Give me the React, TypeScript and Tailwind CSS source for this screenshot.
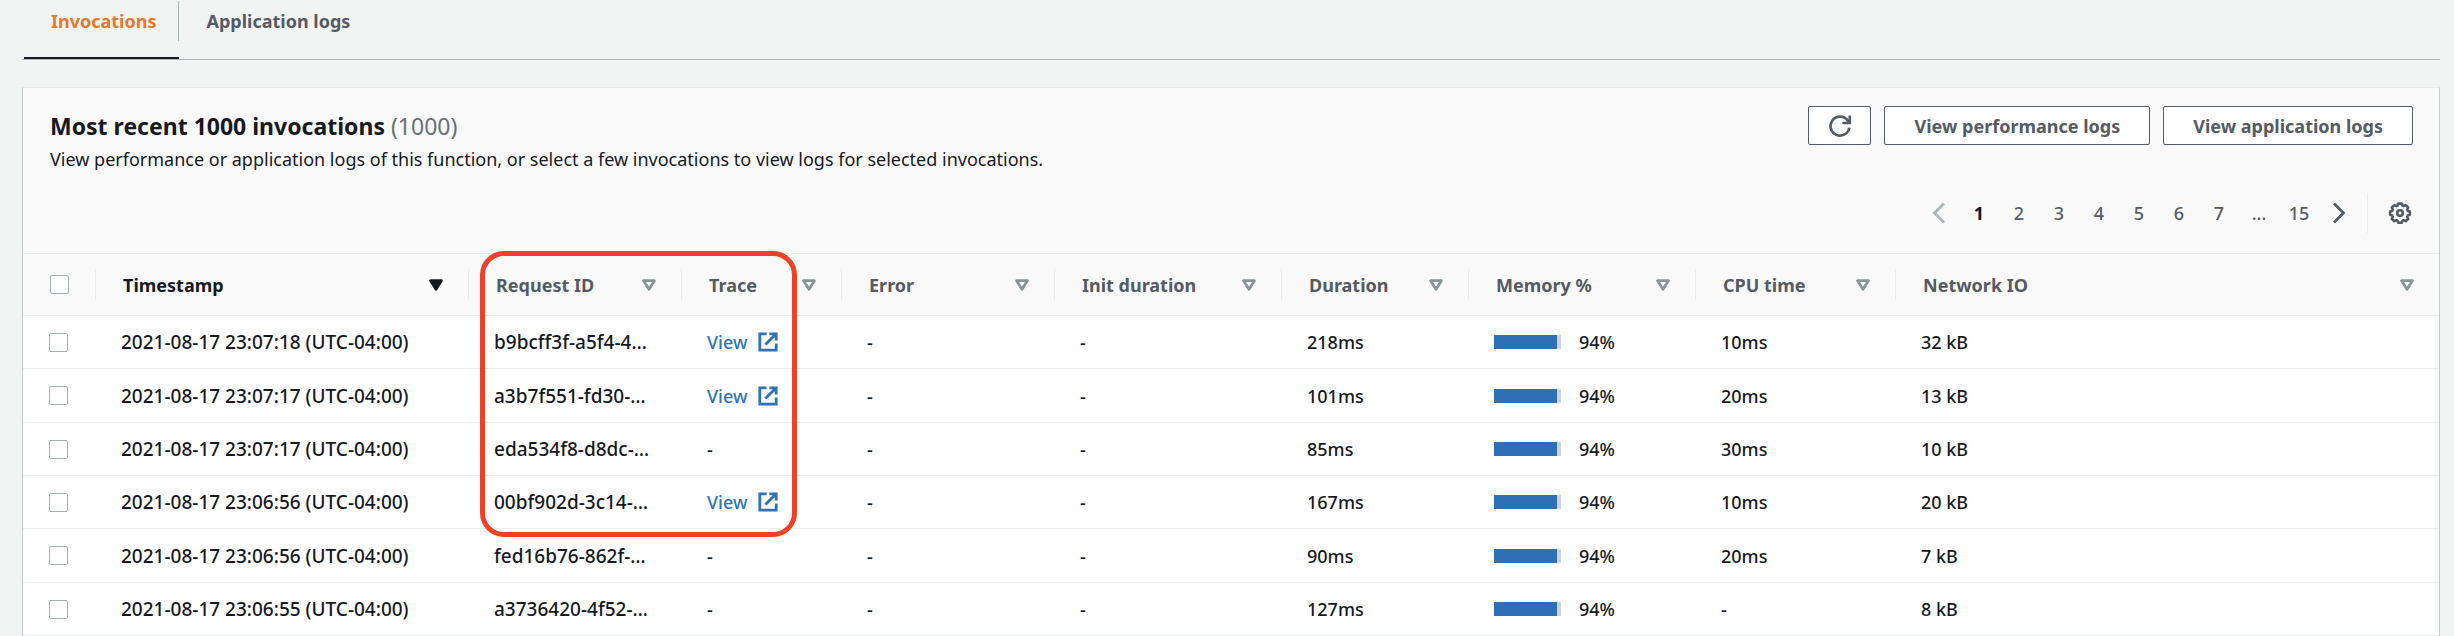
import React from "react";

const COLUMNS = [
  { label: "Timestamp", width: "w-[373px]", sorted: true },
  { label: "Request ID", width: "w-[213px]" },
  { label: "Trace", width: "w-[160px]" },
  { label: "Error", width: "w-[213px]" },
  { label: "Init duration", width: "w-[227px]" },
  { label: "Duration", width: "w-[187px]" },
  { label: "Memory %", width: "w-[227px]" },
  { label: "CPU time", width: "w-[200px]" },
  { label: "Network IO", width: "" },
];

const ROWS = [
  { time: "2021-08-17 23:07:18 (UTC-04:00)", id: "b9bcff3f-a5f4-4…", trace: true, duration: "218ms", memory: 94, cpu: "10ms", io: "32 kB" },
  { time: "2021-08-17 23:07:17 (UTC-04:00)", id: "a3b7f551-fd30-…", trace: true, duration: "101ms", memory: 94, cpu: "20ms", io: "13 kB" },
  { time: "2021-08-17 23:07:17 (UTC-04:00)", id: "eda534f8-d8dc-…", trace: false, duration: "85ms", memory: 94, cpu: "30ms", io: "10 kB" },
  { time: "2021-08-17 23:06:56 (UTC-04:00)", id: "00bf902d-3c14-…", trace: true, duration: "167ms", memory: 94, cpu: "10ms", io: "20 kB" },
  { time: "2021-08-17 23:06:56 (UTC-04:00)", id: "fed16b76-862f-…", trace: false, duration: "90ms", memory: 94, cpu: "20ms", io: "7 kB" },
  { time: "2021-08-17 23:06:55 (UTC-04:00)", id: "a3736420-4f52-…", trace: false, duration: "127ms", memory: 94, cpu: "-", io: "8 kB" },
];

const PAGES = ["1", "2", "3", "4", "5", "6", "7", "...", "15"];

const CELL = "border-b border-[#eaeded] p-0 pl-[26px]";
const BUTTON =
  "flex h-[39px] items-center justify-center rounded-[2px] border border-[#545b64] bg-white font-bold text-[#545b64]";

function RefreshIcon() {
  return (
    <svg className="size-6" viewBox="0 0 24 24" fill="none" stroke="currentColor" strokeWidth="2.6" aria-hidden="true">
      <path d="M21.4 13.6A9.5 9.5 0 1 1 19.6 6.4L21.6 9" />
      <path d="M21.8 1.4V9H14.4" />
    </svg>
  );
}

function GearIcon() {
  return (
    <svg className="size-6" viewBox="0 0 24 24" fill="none" stroke="currentColor" strokeWidth="2.6" strokeLinejoin="round" aria-hidden="true">
      <path d="M10.2 2.6h3.6l.6 2 1.3.5 2-1 2.5 2.4-1 2 .6 1.4 2.1.6v3.3l-2.1.6-.6 1.4 1 2-2.5 2.4-2-1-1.3.5-.6 2h-3.6l-.6-2-1.3-.5-2 1-2.5-2.4 1-2-.6-1.4-2.1-.6v-3.3l2.1-.6.6-1.4-1-2 2.5-2.4 2 1 1.3-.5z" />
      <circle cx="12" cy="12.1" r="2.8" />
    </svg>
  );
}

function ExternalIcon() {
  return (
    <svg className="size-5" viewBox="0 0 20 20" fill="none" stroke="currentColor" strokeWidth="2.8" aria-hidden="true">
      <path d="M8.6 1.8H1.8v16.4h16.4v-6.8" />
      <path d="M11.4 1.8h6.8v6.8M18 2L7.4 12.6" />
    </svg>
  );
}

function Chevron({ next = false }: { next?: boolean }) {
  return (
    <svg className="h-[22px] w-3.5" viewBox="0 0 14 22" fill="none" stroke="currentColor" strokeWidth="2.8" aria-hidden="true">
      <path d={next ? "M2 1.5L11.5 11L2 20.5" : "M12 1.5L2.5 11L12 20.5"} />
    </svg>
  );
}

function SortIcon({ filled = false }: { filled?: boolean }) {
  return (
    <svg
      className={filled ? "h-3 w-3.5 text-[#16191f]" : "h-3 w-3.5 text-[#879596]"}
      viewBox="0 0 14 12"
      fill={filled ? "currentColor" : "none"}
      stroke="currentColor"
      strokeWidth="2.8"
      strokeLinejoin="round"
      aria-hidden="true"
    >
      <path d="M1.6 1.7h10.8L7 10.2z" />
    </svg>
  );
}

function Tick({ label }: { label: string }) {
  return (
    <input
      type="checkbox"
      aria-label={label}
      className="block size-[19px] appearance-none rounded-[2px] border border-[#a3b0b1] bg-white checked:bg-[#0073bb]"
    />
  );
}

export default function App() {
  return (
    <main className="min-h-screen bg-[#f2f3f3] pr-[14px] pl-[22px] font-['Noto_Sans',sans-serif] text-[18px] leading-6 font-medium text-[#16191f]">
      <nav className="flex border-b border-[#aab7b8]">
        <a href="#invocations" className="ml-0.5 border-b-2 border-[#16191f] font-bold text-[#e07b2f]">
          <span className="mt-px mb-4 block border-r border-[#aab7b8] py-2 pr-[22px] pl-[27px]">Invocations</span>
        </a>
        <a href="#application-logs" className="px-[27px] pt-[9px] font-bold text-[#545b64]">
          Application logs
        </a>
      </nav>

      <section className="mt-[27px] border-x border-t border-x-[#c3cacb] border-t-[#eaeded] bg-[#fafafa]">
        <header className="flex items-start justify-between px-[26px] pt-[18px]">
          <div className="pl-px">
            <h2 className="pt-[6px] text-[23px] leading-7 font-bold">
              Most recent 1000 invocations <span className="font-normal text-[#687078]">(1000)</span>
            </h2>
            <p className="pt-[7px] font-normal">
              View performance or application logs of this function, or select a few invocations to view logs for
              selected invocations.
            </p>
          </div>
          <div className="flex shrink-0 gap-[13px]">
            <button type="button" aria-label="Refresh" className={`${BUTTON} w-[63px]`}>
              <RefreshIcon />
            </button>
            <button type="button" className={`${BUTTON} px-[29px]`}>
              View performance logs
            </button>
            <button type="button" className={`${BUTTON} px-[29px]`}>
              View application logs
            </button>
          </div>
        </header>

        <div className="flex items-center justify-end pt-[22px] pr-[27px] pb-5 text-[#545b64]">
          <button type="button" aria-label="Previous page" disabled className="flex w-10 justify-center text-[#aab7b8]">
            <Chevron />
          </button>
          {PAGES.map((page) =>
            page === "..." ? (
              <span key={page} className="w-10 text-center">
                ...
              </span>
            ) : (
              <button
                key={page}
                type="button"
                className={page === "1" ? "w-10 text-center font-bold text-[#16191f]" : "w-10 text-center"}
              >
                {page}
              </button>
            ),
          )}
          <button type="button" aria-label="Next page" className="flex w-10 justify-center">
            <Chevron next />
          </button>
          <button type="button" aria-label="Preferences" className="ml-2 flex h-10 items-center border-l border-[#eaeded] pl-5">
            <GearIcon />
          </button>
        </div>

        <div className="relative">
          <table className="w-full table-fixed border-separate border-spacing-0 bg-white text-left">
            <thead className="bg-[#fafafa]">
              <tr className="h-[63px]">
                <th className="w-[72px] border-y border-[#eaeded] p-0 pl-[27px]">
                  <Tick label="Select all invocations" />
                </th>
                {COLUMNS.map((column) => (
                  <th key={column.label} scope="col" className={`${column.width} border-y border-[#eaeded] p-0`}>
                    <div
                      className={`flex h-[31px] items-center justify-between border-l border-[#eaeded] pr-[25px] pl-[27px] ${
                        column.sorted ? "text-[#16191f]" : "text-[#545b64]"
                      }`}
                    >
                      {column.label}
                      <SortIcon filled={column.sorted} />
                    </div>
                  </th>
                ))}
              </tr>
            </thead>
            <tbody>
              {ROWS.map((row, index) => (
                <tr key={index} className="h-[53px] nth-[3n+2]:h-[54px]">
                  <td className={CELL}>
                    <Tick label={`Select invocation ${row.id}`} />
                  </td>
                  <td className={`${CELL} text-[19px]`}>{row.time}</td>
                  <td className={`${CELL} text-[19px]`}>{row.id}</td>
                  <td className={CELL}>
                    {row.trace ? (
                      <a href="#trace" className="flex items-center gap-[11px] text-[#2e73b8]">
                        View <ExternalIcon />
                      </a>
                    ) : (
                      "-"
                    )}
                  </td>
                  <td className={CELL}>-</td>
                  <td className={CELL}>-</td>
                  <td className={CELL}>{row.duration}</td>
                  <td className={CELL}>
                    <div className="flex items-center gap-[18px]">
                      <div className="h-3.5 w-[67px] bg-[#d0d2d3]">
                        <div className="h-full bg-[#2e70b5]" style={{ width: `${row.memory}%` }} />
                      </div>
                      {row.memory}%
                    </div>
                  </td>
                  <td className={CELL}>{row.cpu}</td>
                  <td className={CELL}>{row.io}</td>
                </tr>
              ))}
            </tbody>
          </table>
          <div className="pointer-events-none absolute -top-0.5 left-[457px] h-[286px] w-[317px] rounded-[24px] border-5 border-[#ee4228]" />
        </div>
      </section>
    </main>
  );
}
